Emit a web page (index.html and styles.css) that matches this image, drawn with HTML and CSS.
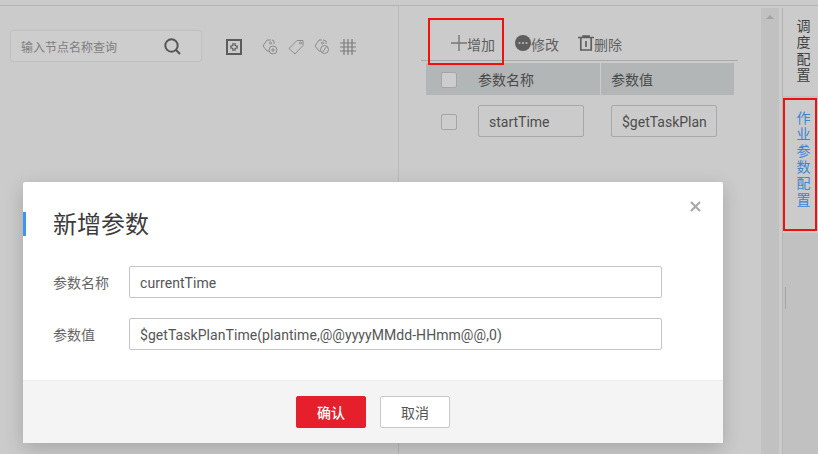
FILE: index.html
```html
<!DOCTYPE html>
<html lang="zh-CN">

<head>
    <meta charset="UTF-8">
    <title>新增参数</title>
    <link rel="stylesheet" href="styles.css">
</head>

<body>
    <div class="page">
        <div class="top-strip"></div>
        <div class="main">
            <div class="left-panel">
                <div class="search-box">
                    <span class="search-text">输入节点名称查询</span>
                    <svg class="search-icon" width="17" height="17" viewBox="0 0 17 17">
                        <circle cx="7.5" cy="7.5" r="6.2" fill="none" stroke="#555" stroke-width="2" />
                        <path d="M12 12 L16 16" stroke="#555" stroke-width="2" />
                    </svg>
                </div>
                <svg class="fit-icon" width="16" height="16" viewBox="0 0 16 16">
                    <rect x="1" y="1" width="14" height="14" fill="none" stroke="#5c5c5c" stroke-width="2" />
                    <path d="M7 4v2.2L5.5 7.2H4M9 4v2.2l1.5 1H12M7 12V9.8L5.5 8.8H4M9 12V9.8l1.5-1H12" fill="none" stroke="#5c5c5c" stroke-width="1.3" />
                </svg>
                <div class="tag-icons">
                    <svg width="16" height="16" viewBox="0 0 16 16" fill="none" stroke="#8c8c8c">
                        <path d="M9 1H5L1 7l4 5h2M10 1l2 1v3" />
                        <circle cx="8.5" cy="4" r="1" />
                        <circle cx="11" cy="11" r="4" />
                        <path d="M9 11h4M11 9v4" />
                    </svg>
                    <svg width="16" height="16" viewBox="0 0 16 16" fill="none" stroke="#8c8c8c">
                        <path d="M9 1.5h6v5L7 15 1 9.5z" />
                        <circle cx="12.5" cy="4" r="1" />
                    </svg>
                    <svg width="16" height="16" viewBox="0 0 16 16" fill="none" stroke="#8c8c8c">
                        <path d="M8 1H5L1 7l4 5h2M9 1l3 1v3" />
                        <circle cx="8.5" cy="4" r="1" />
                        <circle cx="10.5" cy="10.5" r="4" />
                        <path d="M8.5 13.5l4-6" />
                    </svg>
                    <svg width="16" height="16" viewBox="0 0 16 16" stroke="#7c7c7c" stroke-width="1.2">
                        <path d="M0 4h16M0 8h16M0 12h16M4 0v16M8 0v16M12 0v16" />
                    </svg>
                </div>
            </div>

            <div class="right-panel">
                <div class="toolbar">
                    <span class="tool tool-add">
                        <svg width="16" height="16" viewBox="0 0 16 16" stroke="#777" stroke-width="1.4">
                            <path d="M0 8h16M8 0v16" />
                        </svg>增加
                    </span>
                    <span class="tool tool-edit">
                        <svg width="16" height="16" viewBox="0 0 16 16">
                            <circle cx="8" cy="8" r="8" fill="#5e5e5e" />
                            <path d="M3.6 8h1.8M7.1 8h1.8M10.6 8h1.8" stroke="#ccc" stroke-width="1.6" />
                        </svg>修改
                    </span>
                    <span class="tool tool-delete">
                        <svg width="16" height="16" viewBox="0 0 16 16" fill="none" stroke="#5e5e5e" stroke-width="1.7">
                            <path d="M0 2.5h16M5 2.5V1h6v1.5M2.8 2.5V15h10.4V2.5M8 6v6" />
                        </svg>删除
                    </span>
                </div>
                <div class="param-table">
                    <div class="table-head">
                        <div class="check-col"><span class="checkbox"></span></div>
                        <div class="name-col">参数名称</div>
                        <div class="value-col">参数值</div>
                    </div>
                    <div class="table-row">
                        <div class="check-col"><span class="checkbox"></span></div>
                        <div class="name-col"><span class="cell-input">startTime</span></div>
                        <div class="value-col"><span class="cell-input">$getTaskPlan</span></div>
                    </div>
                </div>
            </div>

            <div class="scroll-track">
                <span class="scroll-arrow"></span>
            </div>

            <div class="side-tabs">
                <div class="side-tab">调度配置</div>
                <div class="side-tab side-tab-active">作业参数配置</div>
                <span class="side-grip"></span>
            </div>
        </div>
    </div>

    <div class="mark mark-add"></div>
    <div class="mark mark-tab"></div>

    <div class="dialog">
        <div class="dialog-body">
            <h2 class="dialog-title">新增参数</h2>
            <span class="dialog-close">
                <svg width="11" height="11" viewBox="0 0 11 11" stroke="#a9a9a9" stroke-width="2.2">
                    <path d="M1 1l9 9M10 1l-9 9" />
                </svg>
            </span>
            <div class="form-row">
                <label class="form-label">参数名称</label>
                <div class="form-input">currentTime</div>
            </div>
            <div class="form-row">
                <label class="form-label">参数值</label>
                <div class="form-input">$getTaskPlanTime(plantime,@@yyyyMMdd-HHmm@@,0)</div>
            </div>
        </div>
        <div class="dialog-footer">
            <button class="btn btn-primary">确认</button>
            <button class="btn">取消</button>
        </div>
    </div>
</body>

</html>
```

FILE: styles.css
```css
html,
body {
    margin: 0;
    height: 100%;
}

body {
    position: relative;
    width: 818px;
    height: 454px;
    overflow: hidden;
    background-color: #cbcbcb;
    font-family: Roboto, "Noto Sans CJK SC", sans-serif;
    font-size: 14px;
    color: #4a4a4a;
}

.page {
    display: flex;
    flex-direction: column;
    height: 454px;
}

.top-strip {
    height: 5px;
    flex: none;
    border-bottom: 1px solid #b4b4b4;
}

.main {
    display: flex;
    flex: 1;
    min-height: 0;
}

.left-panel {
    width: 399px;
    flex: none;
    display: flex;
    align-items: flex-start;
    padding: 25px 0 0 11px;
    box-sizing: border-box;
    border-right: 1px solid #b9b9b9;
}

.search-box {
    width: 190px;
    height: 30px;
    box-sizing: border-box;
    display: flex;
    align-items: center;
    justify-content: space-between;
    padding: 0 20px 0 10px;
    background-color: #cdcdcd;
    border-radius: 2px;
    box-shadow: 0 0 2px rgba(0, 0, 0, 0.18);
}

.search-text {
    font-size: 12px;
    color: #7d7d7d;
}

.fit-icon {
    margin: 8px 0 0 25px;
}

.tag-icons {
    display: flex;
    gap: 10px;
    margin: 8px 0 0 20px;
}

.right-panel {
    width: 361px;
    flex: none;
    box-sizing: border-box;
    padding: 0 22px;
}

.toolbar {
    height: 55px;
    box-sizing: border-box;
    display: flex;
    align-items: flex-end;
    padding: 0 0 5px 30px;
    border-bottom: 1px solid #a9a9a9;
    font-size: 14px;
    color: #5f5f5f;
}

.tool {
    display: flex;
    align-items: center;
    line-height: 20px;
}

.tool svg {
    margin-bottom: 4px;
}

.tool-edit {
    margin-left: 20px;
}

.tool-delete {
    margin-left: 19px;
}

.param-table {
    margin: 2px 5px 0;
    width: 308px;
}

.table-head,
.table-row {
    display: flex;
    align-items: center;
}

.table-head {
    height: 32px;
    background-color: #b2b6b6;
    color: #4a4a4a;
    font-size: 14px;
}

.table-row {
    height: 52px;
    box-sizing: border-box;
}

.check-col {
    width: 52px;
    padding: 2px 0 0 15px;
    box-sizing: border-box;
    display: flex;
}

.name-col {
    width: 122px;
    box-sizing: border-box;
    height: 100%;
    display: flex;
    align-items: center;
}

.value-col {
    flex: 1;
    padding-left: 10px;
    height: 100%;
    display: flex;
    align-items: center;
    border-left: 1px solid #cbcbcb;
}

.table-row .value-col {
    border-left-color: transparent;
}

.checkbox {
    width: 14px;
    height: 14px;
    border: 1px solid #a5a5a5;
    border-radius: 2px;
    background-color: #cdcdcd;
}

.cell-input {
    display: block;
    width: 106px;
    height: 32px;
    line-height: 32px;
    box-sizing: border-box;
    padding: 0 10px;
    border: 1px solid #a8a8a8;
    border-radius: 2px;
    white-space: nowrap;
    color: #4d4d4d;
}

.scroll-track {
    width: 18px;
    flex: none;
    margin-left: 1px;
    background-color: #c1c1c1;
    margin-top: 2px;
    display: flex;
    justify-content: center;
}

.scroll-arrow {
    margin-top: 7px;
    width: 0;
    height: 0;
    border-left: 4px solid transparent;
    border-right: 4px solid transparent;
    border-bottom: 4px solid #a3a3a3;
}

.side-tabs {
    position: relative;
    flex: 1;
    margin-left: 3px;
    margin-top: 2px;
    background-color: #c1c1c1;
    border-left: 1px solid #b5b5b5;
}

.side-tab {
    padding: 10px 7px 13px 13px;
    background-color: #cbcbcb;
    line-height: 16.3px;
    font-size: 14px;
    color: #3f3f3f;
    text-align: center;
}

.side-tab-active {
    margin-top: 3px;
    padding: 11px 7px 25px 13px;
    color: #3a85d5;
}

.side-grip {
    position: absolute;
    left: 2px;
    top: 279px;
    width: 1px;
    height: 22px;
    background-color: #a6a6a6;
}

.mark {
    position: absolute;
    box-sizing: border-box;
    border: 2px solid #f01010;
}

.mark-add {
    left: 428px;
    top: 18px;
    width: 76px;
    height: 47px;
}

.mark-tab {
    left: 783px;
    top: 98px;
    width: 34px;
    height: 133px;
}

.dialog {
    position: absolute;
    left: 23px;
    top: 182px;
    width: 700px;
    height: 261px;
    background-color: #fff;
    border-radius: 2px;
    box-shadow: 0 6px 20px rgba(0, 0, 0, 0.18);
    display: flex;
    flex-direction: column;
}

.dialog-body {
    position: relative;
    flex: 1;
    padding: 31px 61px 0 30px;
}

.dialog-title {
    position: relative;
    margin: 0 0 29px;
    height: 24px;
    line-height: 24px;
    font-size: 24px;
    font-weight: 400;
    color: #3c3c3c;
}

.dialog-title::before {
    content: '';
    position: absolute;
    left: -30px;
    top: -1px;
    width: 3px;
    height: 24px;
    background-color: #3e95f0;
}

.dialog-close {
    position: absolute;
    right: 22px;
    top: 19px;
    display: flex;
}

.form-row {
    display: flex;
    align-items: center;
    margin-bottom: 20px;
}

.form-label {
    width: 76px;
    font-size: 14px;
    color: #666;
}

.form-input {
    flex: 1;
    height: 32px;
    line-height: 32px;
    box-sizing: border-box;
    padding: 0 10px;
    border: 1px solid #c4c4c4;
    border-radius: 2px;
    color: #555;
    white-space: nowrap;
    letter-spacing: 0.06px;
}

.dialog-footer {
    height: 63px;
    box-sizing: border-box;
    flex: none;
    display: flex;
    justify-content: center;
    align-items: center;
    gap: 14px;
    background-color: #f4f4f4;
    border-top: 1px solid #ececec;
}

.btn {
    width: 70px;
    height: 32px;
    padding: 0;
    border: 1px solid #c8c8c8;
    border-radius: 2px;
    background-color: #fff;
    font-family: inherit;
    font-size: 14px;
    color: #555;
}

.btn-primary {
    border-color: #e61f2c;
    background-color: #e61f2c;
    color: #fff;
    font-weight: 500;
}
```
